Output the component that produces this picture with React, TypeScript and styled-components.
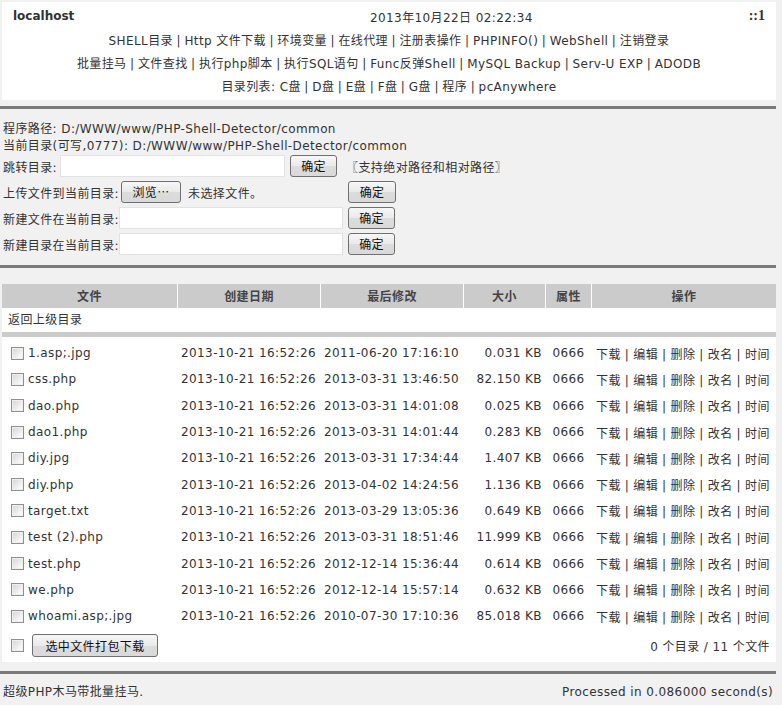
import React from "react";
import styled, { createGlobalStyle } from "styled-components";

const GlobalStyle = createGlobalStyle`
	html, body {
		margin: 0;
		padding: 0;
		background: #f1f1f1;
	}
	body {
		font-family: "DejaVu Sans", "Noto Sans CJK SC", sans-serif;
		font-size: 12px;
		letter-spacing: 0.4px;
		color: #333;
	}
`;

const Page = styled.div`
	width: 776px;
	padding-bottom: 6px;
`;

const Header = styled.div`
	margin: 2px 0 0 2px;
	width: 774px;
	background: #fff;
	padding-bottom: 1px;
`;

const TopRow = styled.div`
	display: grid;
	grid-template-columns: 357px auto 1fr;
	align-items: center;
	height: 28px;
	padding: 0 11px;
`;

const Host = styled.div`
	font-weight: bold;
	letter-spacing: 0;
	color: #333;
`;

const Clock = styled.div`
	color: #333;
`;

const Ip = styled.div`
	justify-self: end;
	font-family: "Liberation Serif", "DejaVu Serif", serif;
	font-weight: bold;
	font-size: 14px;
	letter-spacing: 0;
`;

const NavLine = styled.div`
	text-align: center;
	line-height: 23px;
	height: 23px;
	white-space: nowrap;
`;

const NavLink = styled.a`
	color: #333;
	text-decoration: none;
`;

const Sep = styled.span<{ space?: number }>`
	padding: 0 ${({ space }) => space ?? 3.5}px;
`;

const Rule = styled.div<{ gapTop: number }>`
	margin-top: ${({ gapTop }) => gapTop}px;
	height: 3px;
	background: #7b7b7b;
`;

const Info = styled.div`
	padding: 12px 0 0 3px;
`;

const InfoLine = styled.div`
	line-height: 17px;
`;

const FormRow = styled.div`
	display: flex;
	align-items: center;
	height: 22px;
	margin-bottom: 4px;
`;

const Label = styled.span<{ gapRight?: number }>`
	margin-right: ${({ gapRight }) => gapRight ?? 0}px;
`;

const TextBox = styled.input<{ w: number }>`
	width: ${({ w }) => w}px;
	height: 22px;
	box-sizing: border-box;
	border: 1px solid #e2e2e2;
	background: #fff;
	padding: 0 3px;
	font: inherit;
	outline: none;
`;

const OldButton = styled.button<{ w: number; h?: number; gapLeft?: number }>`
	width: ${({ w }) => w}px;
	height: ${({ h }) => h ?? 22}px;
	margin-left: ${({ gapLeft }) => gapLeft ?? 5}px;
	box-sizing: border-box;
	border: 1px solid #707070;
	border-radius: 3px;
	background: linear-gradient(#f7f7f7, #e9e9e9 50%, #dcdcdc 51%, #d9d9d9);
	font-family: "Noto Sans CJK SC", "DejaVu Sans", sans-serif;
	font-size: 12px;
	letter-spacing: 0.4px;
	color: #111;
	padding: 0;
	line-height: 18px;
`;

const Hint = styled.span<{ gapLeft: number; w?: number }>`
	margin-left: ${({ gapLeft }) => gapLeft}px;
	${({ w }) => (w ? `width: ${w}px;` : "")}
`;

const FileTable = styled.div`
	margin: 16px 0 0 2px;
	width: 774px;
`;

const cols = "175px 142px 142px 81px 45px 1fr";

const HeadRow = styled.div`
	display: grid;
	grid-template-columns: ${cols};
	column-gap: 1px;
	background: #fff;
	height: 24px;
`;

const HeadCell = styled.div`
	background: #cbcbcb;
	font-weight: bold;
	color: #444;
	text-align: center;
	line-height: 24px;
	font-family: "Noto Sans CJK SC", sans-serif;
`;

const ParentRow = styled.div`
	background: #fff;
	height: 24px;
	line-height: 24px;
	padding-left: 6px;
`;

const Divider = styled.div`
	height: 5px;
	background: #cbcbcb;
`;

const Body = styled.div`
	background: #fff;
	padding-top: 3px;
`;

const Row = styled.div`
	display: grid;
	grid-template-columns: ${cols};
	column-gap: 1px;
	height: 26.3px;
	align-items: center;
	white-space: nowrap;
`;

const Cell = styled.div<{ align?: "left" | "right" | "center"; pad?: string }>`
	text-align: ${({ align }) => align ?? "left"};
	padding: ${({ pad }) => pad ?? "0 3px"};
	overflow: hidden;
`;

const NameCell = styled.div`
	display: flex;
	align-items: center;
	padding-left: 9px;
	gap: 4px;
`;

const Check = styled.span`
	display: inline-block;
	width: 13px;
	height: 13px;
	box-sizing: border-box;
	border: 1px solid #8f8f8f;
	background: linear-gradient(135deg, #d4d4d4, #f4f4f4 70%, #fff);
	box-shadow: inset 0 0 0 1px #f0f0f0;
	flex: none;
`;

const Action = styled.a`
	color: #333;
	text-decoration: none;
`;

const FootRow = styled.div`
	display: flex;
	align-items: center;
	justify-content: space-between;
	height: 33px;
	padding: 0 6px 0 9px;
`;

const PackGroup = styled.div`
	display: flex;
	align-items: center;
`;

const Footer = styled.div`
	display: flex;
	justify-content: space-between;
	padding: 10px 3px 0 3px;
	line-height: 17px;
`;

const navRows: string[][] = [
	["SHELL目录", "Http 文件下载", "环境变量", "在线代理", "注册表操作", "PHPINFO()", "WebShell", "注销登录"],
	["批量挂马", "文件查找", "执行php脚本", "执行SQL语句", "Func反弹Shell", "MySQL Backup", "Serv-U EXP", "ADODB"],
];

const drives = ["C盘", "D盘", "E盘", "F盘", "G盘", "程序", "pcAnywhere"];

const files = [
	["1.asp;.jpg", "2013-10-21 16:52:26", "2011-06-20 17:16:10", "0.031 KB"],
	["css.php", "2013-10-21 16:52:26", "2013-03-31 13:46:50", "82.150 KB"],
	["dao.php", "2013-10-21 16:52:26", "2013-03-31 14:01:08", "0.025 KB"],
	["dao1.php", "2013-10-21 16:52:26", "2013-03-31 14:01:44", "0.283 KB"],
	["diy.jpg", "2013-10-21 16:52:26", "2013-03-31 17:34:44", "1.407 KB"],
	["diy.php", "2013-10-21 16:52:26", "2013-04-02 14:24:56", "1.136 KB"],
	["target.txt", "2013-10-21 16:52:26", "2013-03-29 13:05:36", "0.649 KB"],
	["test (2).php", "2013-10-21 16:52:26", "2013-03-31 18:51:46", "11.999 KB"],
	["test.php", "2013-10-21 16:52:26", "2012-12-14 15:36:44", "0.614 KB"],
	["we.php", "2013-10-21 16:52:26", "2012-12-14 15:57:14", "0.632 KB"],
	["whoami.asp;.jpg", "2013-10-21 16:52:26", "2010-07-30 17:10:36", "85.018 KB"],
];

const actions = ["下载", "编辑", "删除", "改名", "时间"];

function Joined({ items, prefix }: { items: string[]; prefix?: string }) {
	return (
		<>
			{prefix}
			{items.map((item, i) => (
				<React.Fragment key={item}>
					{i > 0 && <Sep>|</Sep>}
					<NavLink href="#">{item}</NavLink>
				</React.Fragment>
			))}
		</>
	);
}

function App() {
	return (
		<Page>
			<GlobalStyle />
			<Header>
				<TopRow>
					<Host>localhost</Host>
					<Clock>2013年10月22日 02:22:34</Clock>
					<Ip>::1</Ip>
				</TopRow>
				{navRows.map((row, i) => (
					<NavLine key={`nav-${i}`}>
						<Joined items={row} />
					</NavLine>
				))}
				<NavLine>
					<Joined prefix="目录列表: " items={drives} />
				</NavLine>
			</Header>
			<Rule gapTop={6} />

			<Info>
				<InfoLine>程序路径: D:/WWW/www/PHP-Shell-Detector/common</InfoLine>
				<InfoLine>当前目录(可写,0777): D:/WWW/www/PHP-Shell-Detector/common</InfoLine>
				<FormRow>
					<Label gapRight={3}>跳转目录:</Label>
					<TextBox w={225} />
					<OldButton w={47}>确定</OldButton>
					<Hint gapLeft={9}>〖支持绝对路径和相对路径〗</Hint>
				</FormRow>
				<FormRow>
					<Label gapRight={2}>上传文件到当前目录:</Label>
					<OldButton w={60} gapLeft={0}>浏览…</OldButton>
					<Hint gapLeft={7} w={160}>未选择文件。</Hint>
					<OldButton w={48} gapLeft={0}>确定</OldButton>
				</FormRow>
				<FormRow>
					<Label>新建文件在当前目录:</Label>
					<TextBox w={224} />
					<OldButton w={47}>确定</OldButton>
				</FormRow>
				<FormRow>
					<Label>新建目录在当前目录:</Label>
					<TextBox w={224} />
					<OldButton w={47}>确定</OldButton>
				</FormRow>
			</Info>
			<Rule gapTop={10} />

			<FileTable>
				<HeadRow>
					<HeadCell>文件</HeadCell>
					<HeadCell>创建日期</HeadCell>
					<HeadCell>最后修改</HeadCell>
					<HeadCell>大小</HeadCell>
					<HeadCell>属性</HeadCell>
					<HeadCell>操作</HeadCell>
				</HeadRow>
				<ParentRow>返回上级目录</ParentRow>
				<Divider />
				<Body>
					{files.map(([name, created, modified, size]) => (
						<Row key={name}>
							<NameCell>
								<Check />
								<span>{name}</span>
							</NameCell>
							<Cell>{created}</Cell>
							<Cell>{modified}</Cell>
							<Cell align="right">{size}</Cell>
							<Cell align="center">0666</Cell>
							<Cell pad="0 0 0 4px">
								{actions.map((a, i) => (
									<React.Fragment key={a}>
										{i > 0 && <Sep space={4}>|</Sep>}
										<Action href="#">{a}</Action>
									</React.Fragment>
								))}
							</Cell>
						</Row>
					))}
					<FootRow>
						<PackGroup>
							<Check />
							<OldButton w={126} h={23} gapLeft={8}>
								选中文件打包下载
							</OldButton>
						</PackGroup>
						<span>0 个目录 / 11 个文件</span>
					</FootRow>
				</Body>
			</FileTable>
			<Rule gapTop={9} />

			<Footer>
				<span>超级PHP木马带批量挂马.</span>
				<span>Processed in 0.086000 second(s)</span>
			</Footer>
		</Page>
	);
}

export default App;
